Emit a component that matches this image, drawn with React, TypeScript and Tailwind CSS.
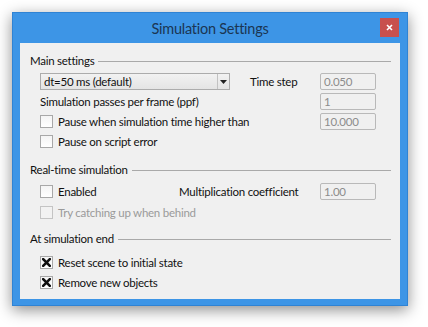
import React from 'react';

const FONT = { fontFamily: 'Lato, "Noto Sans", sans-serif' };

function Box({ checked, disabled }: { checked?: boolean; disabled?: boolean }) {
  return (
    <div
      className={`w-[13px] h-[13px] border flex items-center justify-center shrink-0 ${
        disabled ? 'border-[#c4c4c4] bg-[#f2f2f2]' : 'border-[#a8a8a8] bg-gradient-to-b from-[#f4f4f4] to-[#ffffff]'
      }`}
    >
      {checked && (
        <svg width="9" height="9" viewBox="0 0 9 9">
          <path d="M1.2 1.2 L7.8 7.8 M7.8 1.2 L1.2 7.8" stroke="#111" strokeWidth="2.6" strokeLinecap="square" />
        </svg>
      )}
    </div>
  );
}

function Check({ label, checked, disabled }: { label: string; checked?: boolean; disabled?: boolean }) {
  return (
    <div className="flex items-center gap-[5px]">
      <Box checked={checked} disabled={disabled} />
      <span className={disabled ? 'text-[#9a9a9a]' : 'text-[#111]'}>{label}</span>
    </div>
  );
}

function Field({ value }: { value: string }) {
  return (
    <div className="w-[56px] h-[17px] border border-[#b9b9b9] rounded-[2px] bg-[#f0f0f0] text-[#8c8c8c] pl-[3px] flex items-center leading-none">
      {value}
    </div>
  );
}

function GroupTitle({ text }: { text: string }) {
  return (
    <div className="flex items-center h-[16px] pr-[9px]">
      <span className="text-[#111]">{text}</span>
      <div className="flex-1 h-px bg-[#a9a9a9] ml-[4px] mt-[1px]" />
    </div>
  );
}

export default function App() {
  return (
    <div className="w-[428px] h-[327px] bg-white pl-[12px] pt-[12px]" style={FONT}>
      <div className="w-[396px] h-[294px] bg-[#3d95e6] border border-[#2f83d4] shadow-[0_4px_14px_rgba(0,0,0,0.45)] flex flex-col">
        {/* title bar */}
        <div className="h-[30px] relative flex items-center justify-center shrink-0">
          <span className="text-[14.5px] tracking-[-0.25px] text-[#1b3553] mt-[2px]">Simulation Settings</span>
          <div className="absolute right-[8px] top-[5px] w-[19px] h-[19px] bg-[#c8504d] flex items-center justify-center">
            <svg width="7" height="7" viewBox="0 0 7 7">
              <path d="M1 1 L6 6 M6 1 L1 6" stroke="#fff" strokeWidth="1.6" />
            </svg>
          </div>
        </div>

        {/* content */}
        <div className="mx-[7px] mb-[6px] flex-1 bg-[#f0f0f0] pl-[10px] pt-[10px] text-[11.5px] tracking-[-0.25px] leading-none">
          <GroupTitle text="Main settings" />
          <div className="pl-[10px] mt-[4px] w-[346px] flex flex-col gap-[3px]">
            <div className="flex items-center h-[17px]">
              <div className="w-[190px] h-[17px] border border-[#acacac] bg-gradient-to-b from-[#f2f2f2] to-[#e4e4e4] flex items-center">
                <span className="flex-1 pl-[3px] text-[#111]">dt=50 ms (default)</span>
                <div className="w-[12px] h-full border-l border-[#c2c2c2] flex items-center justify-center">
                  <svg width="7" height="4" viewBox="0 0 7 4">
                    <path d="M0 0 H7 L3.5 4 Z" fill="#222" />
                  </svg>
                </div>
              </div>
              <span className="ml-[20px] text-[#111]">Time step</span>
              <div className="ml-auto">
                <Field value="0.050" />
              </div>
            </div>
            <div className="flex items-center h-[17px]">
              <span className="text-[#111]">Simulation passes per frame (ppf)</span>
              <div className="ml-auto">
                <Field value="1" />
              </div>
            </div>
            <div className="flex items-center h-[17px]">
              <Check label="Pause when simulation time higher than" />
              <div className="ml-auto">
                <Field value="10.000" />
              </div>
            </div>
            <div className="flex items-center h-[17px]">
              <Check label="Pause on script error" />
            </div>
          </div>

          <div className="mt-[12px]">
            <GroupTitle text="Real-time simulation" />
          </div>
          <div className="pl-[10px] mt-[5px] w-[346px] flex flex-col gap-[4px]">
            <div className="flex items-center h-[17px]">
              <div className="w-[139px]">
                <Check label="Enabled" />
              </div>
              <span className="text-[#111]">Multiplication coefficient</span>
              <div className="ml-auto">
                <Field value="1.00" />
              </div>
            </div>
            <div className="flex items-center h-[17px]">
              <Check label="Try catching up when behind" disabled />
            </div>
          </div>

          <div className="mt-[10px]">
            <GroupTitle text="At simulation end" />
          </div>
          <div className="pl-[10px] mt-[7px] flex flex-col gap-[3px]">
            <div className="flex items-center h-[17px]">
              <Check label="Reset scene to initial state" checked />
            </div>
            <div className="flex items-center h-[17px]">
              <Check label="Remove new objects" checked />
            </div>
          </div>
        </div>
      </div>
    </div>
  );
}
